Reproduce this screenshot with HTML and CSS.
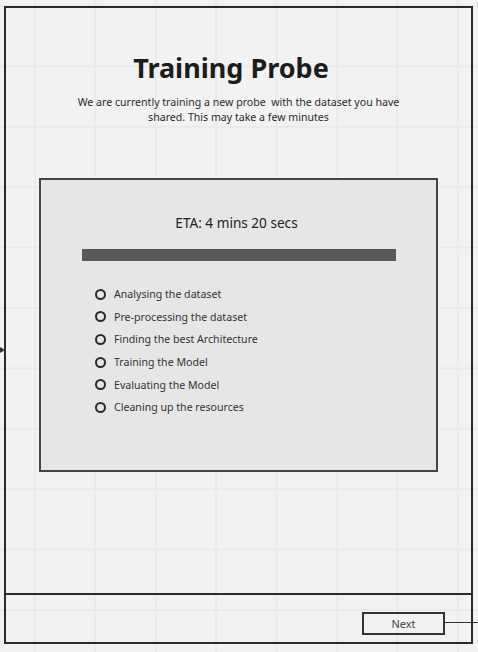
FILE: index.html
```html
<!DOCTYPE html>
<html>
<head>
<meta charset="utf-8">
<link rel="stylesheet" href="styles.css">
</head>
<body>
<div class="canvas">
  <span class="arrow-in"></span>
  <div class="frame">
    <main class="content">
      <h1 class="title">Training Probe</h1>
      <p class="subtitle">We are currently training a new probe&nbsp; with the dataset you have<br>shared. This may take a few minutes</p>
      <section class="panel">
        <div class="eta">ETA: 4 mins 20 secs</div>
        <div class="bar"></div>
        <ul class="steps">
          <li class="step"><span class="radio"></span>Analysing the dataset</li>
          <li class="step"><span class="radio"></span>Pre-processing the dataset</li>
          <li class="step"><span class="radio"></span>Finding the best Architecture</li>
          <li class="step"><span class="radio"></span>Training the Model</li>
          <li class="step"><span class="radio"></span>Evaluating the Model</li>
          <li class="step"><span class="radio"></span>Cleaning up the resources</li>
        </ul>
      </section>
    </main>
    <footer class="footer">
      <button class="next">Next<span class="connector"></span></button>
    </footer>
  </div>
</div>
</body>
</html>
```
FILE: styles.css
```css
* { box-sizing: border-box; }
html, body { margin: 0; padding: 0; }
body {
  width: 478px;
  height: 652px;
  overflow: hidden;
  background-color: #f2f2f2;
  background-image:
    linear-gradient(to right, #eaeaea 0, #eaeaea 2px, transparent 2px),
    linear-gradient(to bottom, #eaeaea 0, #eaeaea 2px, transparent 2px);
  background-size: 60.4px 60.4px;
  background-position: 34px 5px;
  font-family: "Noto Sans", "Open Sans", sans-serif;
  color: #222;
}
.canvas {
  position: relative;
  padding: 6px 0 0 4px;
  width: 478px;
  height: 652px;
}
.arrow-in {
  position: absolute;
  left: 0;
  top: 347px;
  width: 0;
  height: 0;
  border-top: 3px solid transparent;
  border-bottom: 3px solid transparent;
  border-left: 5px solid #333;
}
.frame {
  width: 469px;
  height: 638px;
  border: 2px solid #2a2a2a;
  display: flex;
  flex-direction: column;
}
.content {
  flex: 1;
  display: flex;
  flex-direction: column;
  align-items: center;
  padding-top: 42px;
  border-bottom: 2px solid #2a2a2a;
}
.title {
  margin: 0;
  font-size: 27px;
  font-weight: 700;
  line-height: 36px;
  color: #1c1c1c;
  margin-left: -15px;
}
.subtitle {
  margin: 9px 0 0;
  font-size: 10.6px;
  line-height: 15px;
  text-align: center;
  color: #2a2a2a;
}
.panel {
  margin-top: 53px;
  width: 399px;
  height: 294px;
  background: #e6e6e6;
  border: 2px solid #444;
  display: flex;
  flex-direction: column;
  padding: 33px 0 0 41px;
}
.eta {
  font-size: 13.6px;
  line-height: 20px;
  text-align: center;
  margin-right: 41px;
  margin-left: -4px;
  color: #222;
}
.bar {
  margin-top: 16px;
  width: 314px;
  height: 12px;
  background: #595959;
}
.steps {
  list-style: none;
  margin: 22px 0 0;
  padding: 0 0 0 13px;
}
.step {
  display: flex;
  align-items: center;
  height: 22.6px;
  font-size: 10.6px;
  color: #333;
}
.radio {
  width: 11px;
  height: 11px;
  border: 2px solid #2a2a2a;
  border-radius: 50%;
  margin-right: 8px;
}
.footer {
  height: 47px;
  display: flex;
  justify-content: flex-end;
  align-items: flex-start;
  padding: 17px 26px 0 0;
}
.next {
  position: relative;
  width: 83px;
  height: 23px;
  border: 2px solid #333;
  background: transparent;
  font-family: "Noto Sans", "Open Sans", sans-serif;
  font-size: 11px;
  color: #444;
  padding: 0;
}
.connector {
  position: absolute;
  left: 81px;
  top: 8px;
  width: 40px;
  height: 1px;
  background: #333;
}
```
